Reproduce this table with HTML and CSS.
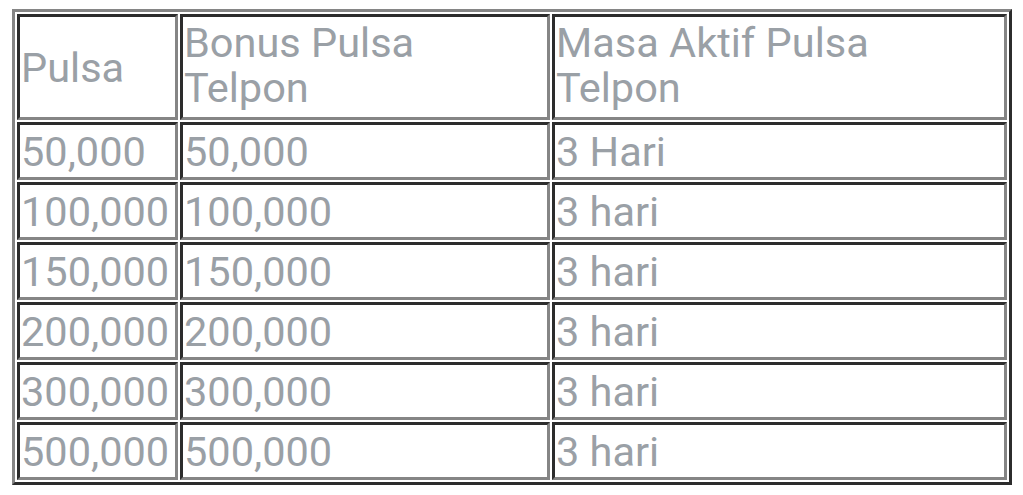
FILE: index.html
```html
<!DOCTYPE html>
<html>
<head>
<meta charset="utf-8">
<link rel="stylesheet" href="styles.css">
</head>
<body>
<table class="tbl">
  <colgroup>
    <col class="c1">
    <col class="c2">
    <col class="c3">
  </colgroup>
  <tr class="head">
    <th>Pulsa</th>
    <th class="wrap">Bonus Pulsa Telpon</th>
    <th class="wrap">Masa Aktif Pulsa Telpon</th>
  </tr>
  <tr><td>50,000</td><td>50,000</td><td>3 Hari</td></tr>
  <tr><td>100,000</td><td>100,000</td><td>3 hari</td></tr>
  <tr><td>150,000</td><td>150,000</td><td>3 hari</td></tr>
  <tr><td>200,000</td><td>200,000</td><td>3 hari</td></tr>
  <tr><td>300,000</td><td>300,000</td><td>3 hari</td></tr>
  <tr><td>500,000</td><td>500,000</td><td>3 hari</td></tr>
</table>
</body>
</html>
```

FILE: styles.css
```css
html, body {
  margin: 0;
  padding: 0;
  background: #ffffff;
}
body {
  padding: 9px 0 0 12px;
  font-family: Roboto, "Noto Sans", sans-serif;
}
.tbl {
  width: 998px;
  table-layout: fixed;
  border-collapse: separate;
  border-spacing: 2px;
  border-style: solid;
  border-width: 3px;
  border-color: #858585 #2c2c2c #2c2c2c #858585;
}
.c1 { width: 161px; }
.c2 { width: 370px; }
.c3 { width: 455px; }
.tbl th,
.tbl td {
  box-sizing: border-box;
  border-style: solid;
  border-width: 3px;
  border-color: #2c2c2c #858585 #858585 #2c2c2c;
  padding: 1px;
  font-size: 41.5px;
  line-height: 45px;
  font-weight: 400;
  color: #9aa0a6;
  text-align: left;
  vertical-align: middle;
  white-space: nowrap;
}
.head th {
  height: 106px;
  padding-right: 16px;
  white-space: normal;
}
.head th.wrap {
  padding-bottom: 6px;
}
.tbl td {
  height: 58px;
}
```
